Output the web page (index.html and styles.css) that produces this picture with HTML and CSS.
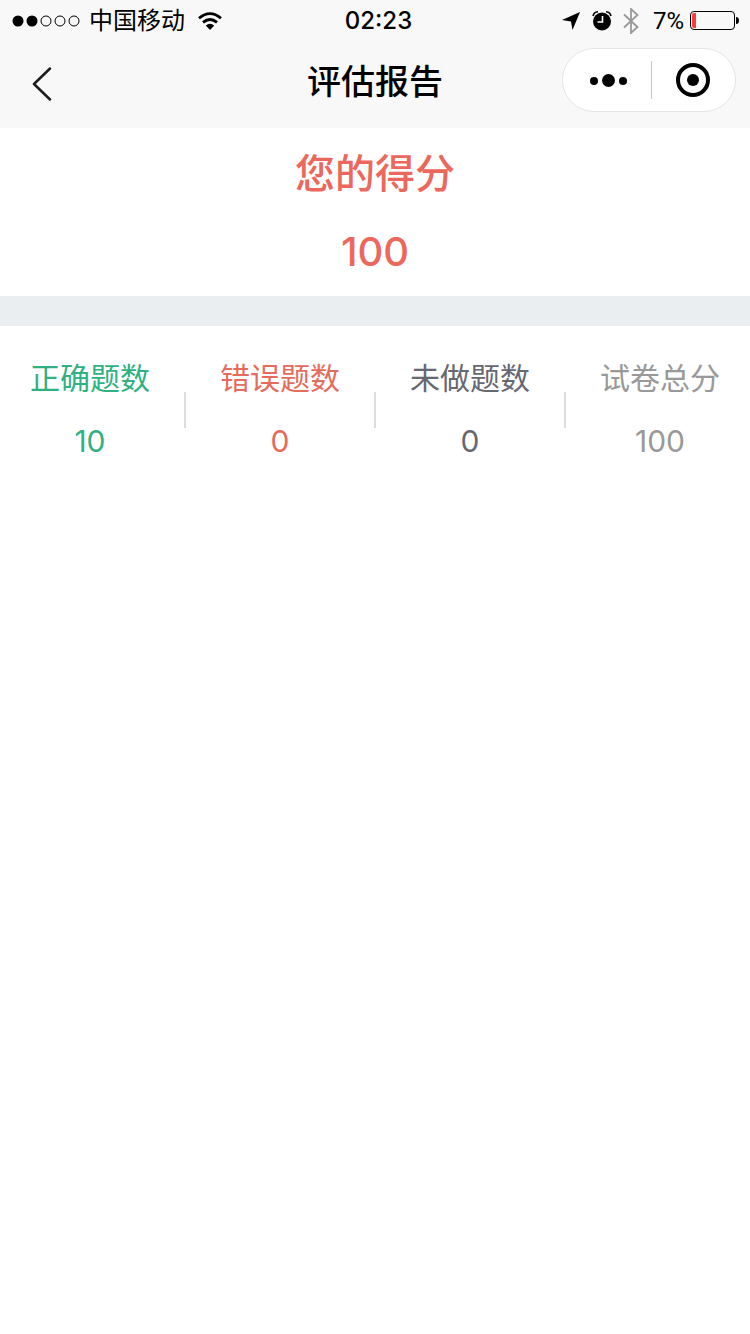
FILE: index.html
```html
<!DOCTYPE html>
<html lang="zh-CN">
<head>
<meta charset="utf-8">
<meta name="viewport" content="width=device-width, initial-scale=1">
<title>评估报告</title>
<link rel="stylesheet" href="styles.css">
</head>
<body>
<header class="top">
  <div class="status">
    <div class="status-left">
      <svg class="signal" width="68" height="12" viewBox="0 0 68 12" aria-hidden="true">
        <circle cx="6" cy="6" r="5.5"/><circle cx="20" cy="6" r="5.5"/>
        <g fill="none" stroke="#000" stroke-width="1"><circle cx="34" cy="6" r="5"/><circle cx="48" cy="6" r="5"/><circle cx="62" cy="6" r="5"/></g>
      </svg>
      <span class="carrier">中国移动</span>
      <svg class="wifi" width="24" height="18" viewBox="0 0 24 18" aria-hidden="true">
        <g fill="none" stroke="#000" stroke-width="2.8"><path d="M1 6.2Q12-3 23 6.2"/><path d="M5 10.4Q12 4.600 19 10.400"/></g>
        <path d="M7.800 13.500Q12 10.200 16.200 13.500L12 18Z"/>
      </svg>
    </div>
    <time class="clock">02:23</time>
    <div class="status-right">
      <svg width="18" height="18" viewBox="0 0 18 18" aria-hidden="true"><path d="M18 0L10.500 18L9 9.500L0 8Z"/></svg>
      <svg class="alarm" width="20" height="20" viewBox="0 0 20 20" aria-hidden="true">
        <circle cx="10" cy="10.500" r="9"/><path d="M1 5Q2 1 6 .8M19 5Q18 1 14 .8" fill="none" stroke="#000" stroke-width="1.600"/>
        <path d="M10.500 5v6h-5" fill="none" stroke="#fff" stroke-width="1.600"/>
      </svg>
      <svg class="bluetooth" width="16" height="26" viewBox="0 0 16 26" aria-hidden="true"><path d="M1 6.500L14.500 19L8 25V1L14.500 7L1 19.500" fill="none" stroke="#999" stroke-width="1.800"/></svg>
      <span class="percent">7%</span>
      <svg class="battery" width="49" height="20" viewBox="0 0 49 20" aria-hidden="true">
        <rect x=".5" y=".5" width="44" height="18" rx="3.500" fill="none" stroke="#000"/>
        <path d="M4 2H6V17H4Q2 17 2 15V4Q2 2 4 2" fill="#f9393a"/><path d="M46 6Q49 6 49 9.500T46 13Z"/>
      </svg>
    </div>
  </div>
  <nav class="nav">
    <button class="back" type="button" aria-label="返回">
      <svg width="20" height="34" viewBox="0 0 20 34" aria-hidden="true"><path d="M18 1.500L2 17L18 32.500" fill="none" stroke="#1c1c1c" stroke-width="2.500" stroke-linecap="round" stroke-linejoin="round"/></svg>
    </button>
    <h1 class="title">评估报告</h1>
    <div class="capsule">
      <button class="capsule-button more" type="button" aria-label="更多">
        <svg width="38" height="14" viewBox="0 0 38 14" aria-hidden="true"><circle cx="4" cy="8" r="4"/><circle cx="18.500" cy="7.500" r="6.500"/><circle cx="33" cy="8" r="4"/></svg>
      </button>
      <button class="capsule-button" type="button" aria-label="关闭">
        <svg width="34" height="34" viewBox="0 0 34 34" aria-hidden="true"><circle cx="17" cy="17" r="15" fill="none" stroke="#000" stroke-width="4"/><circle cx="17" cy="17" r="6"/></svg>
      </button>
    </div>
  </nav>
</header>
<main>
  <section class="score">
    <h2 class="score-label">您的得分</h2>
    <p class="score-value">100</p>
  </section>
  <dl class="stats">
    <div class="stat correct"><dt>正确题数</dt><dd>10</dd></div>
    <div class="divider"></div>
    <div class="stat wrong"><dt>错误题数</dt><dd>0</dd></div>
    <div class="divider"></div>
    <div class="stat blank"><dt>未做题数</dt><dd>0</dd></div>
    <div class="divider"></div>
    <div class="stat total"><dt>试卷总分</dt><dd>100</dd></div>
  </dl>
</main>
</body>
</html>
```
FILE: styles.css
```css
* { box-sizing: border-box; }
body {
  margin: 0;
  background: #fff;
  color: #000;
  font-family: Inter, "Noto Sans CJK SC", sans-serif;
}
h1, h2, p, dl, dd { margin: 0; }
svg { display: block; flex: none; }
button { border: 0; padding: 0; background: none; cursor: pointer; }
.top { padding-bottom: 10px; background: #f8f8f8; }
.status {
  display: grid;
  grid-template-columns: 1fr auto 1fr;
  align-items: center;
  height: 42px;
  padding: 0 11px 0 12px;
  font-size: 24px;
  line-height: 40px;
}
.status-left, .status-right { display: flex; align-items: center; }
.status-right { justify-content: flex-end; }
.carrier { margin-left: 9px; }
.wifi { margin-left: 13px; }
.clock { padding-left: 6px; font-weight: 500; }
.alarm { margin-left: 12px; }
.bluetooth { margin-left: 11px; }
.percent { margin-left: 14px; font-family: Roboto, sans-serif; }
.battery { margin-left: 6px; }
.nav {
  display: grid;
  grid-template-columns: 1fr auto 1fr;
  align-items: center;
  height: 76px;
  padding: 0 14px 0 32px;
}
.back { justify-self: start; padding-top: 8px; }
.title {
  margin-right: 18px;
  padding-top: 3px;
  font-size: 34px;
  line-height: 48px;
  font-weight: 500;
}
.capsule {
  display: flex;
  justify-self: end;
  width: 174px;
  height: 64px;
  border: 1px solid #e5e5e5;
  border-radius: 32px;
  background: #fff;
}
.capsule-button { flex: 1; display: flex; align-items: center; justify-content: center; margin: 12px 0; }
.capsule-button + .capsule-button { border-left: 1px solid #c8c8c8; }
.more { padding-left: 4px; }
.score {
  padding: 16px 0 14px;
  border-bottom: 30px solid #eaeef1;
  color: #ec685c;
  text-align: center;
}
.score-label, .score-value { font-size: 40px; font-weight: 500; }
.score-label { line-height: 60px; }
.score-value { margin-top: 18px; line-height: 60px; }
.stats {
  display: flex;
  justify-content: space-between;
  padding: 30px 30px 0;
  font-size: 30px;
  text-align: center;
}
.stat dt { line-height: 44px; }
.stat dd { margin-top: 19px; line-height: 44px; }
.divider { width: 2px; height: 36px; margin-top: 36px; background: #ddd; }
.correct { color: #2fb183; }
.wrong { color: #e56b5d; }
.blank { color: #666872; }
.total { color: #999; }
```
